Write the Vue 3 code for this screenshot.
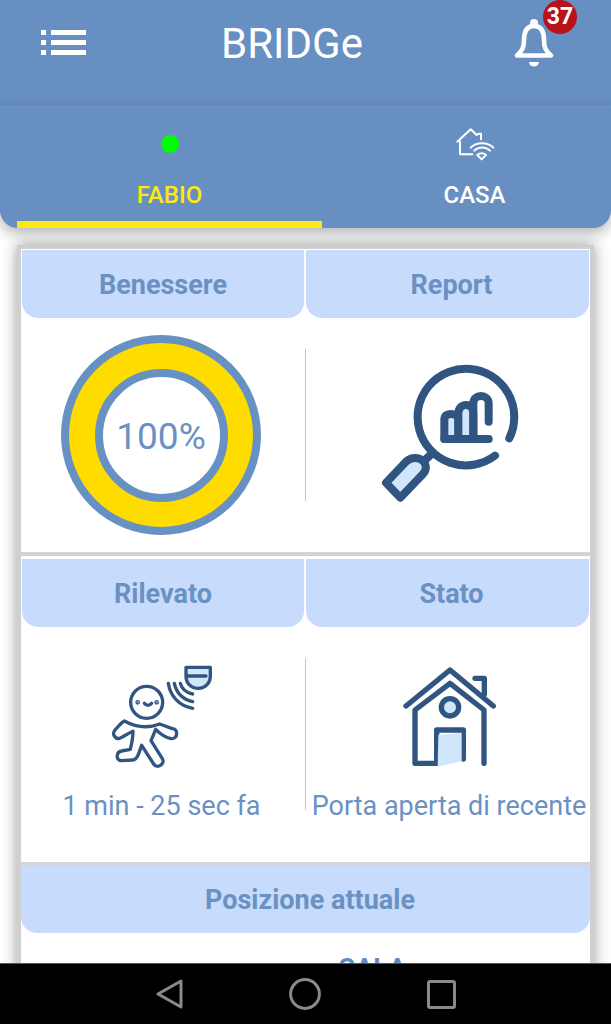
<script setup>
const navy = '#2f5580'
</script>

<template>
  <div class="phone">
    <header class="topbar">
      <div class="menu" aria-label="menu">
        <div class="menu-row" v-for="n in 3" :key="n"><i class="sq"></i><i class="ln"></i></div>
      </div>
      <h1 class="title">BRIDGe</h1>
      <div class="bell-wrap">
        <svg class="bell" width="44" height="50" viewBox="0 0 44 50">
          <circle cx="21" cy="5" r="4" fill="#fff"/>
          <path d="M4 37.5 C9 33 11 30 11 22 C11 13 14 8 21 8 C28 8 31 13 31 22 C31 30 33 33 38 37.5 Z" fill="none" stroke="#fff" stroke-width="4.6" stroke-linejoin="round"/>
          <path d="M16 44 H26 C25.5 47 24 48.5 21 48.5 C18 48.5 16.5 47 16 44 Z" fill="#fff"/>
        </svg>
        <span class="badge">37</span>
      </div>
    </header>

    <nav class="tabs">
      <div class="tab active">
        <div class="tab-icon"><span class="dot"></span></div>
        <span class="tab-label">FABIO</span>
      </div>
      <div class="tab">
        <div class="tab-icon">
          <svg width="40" height="34" viewBox="0 0 120 102" fill="none" stroke="#fff" stroke-width="6" stroke-linecap="round" stroke-linejoin="round">
            <path d="M7 44 L47 7 L65 24 L72 20 H78 V37"/>
            <path d="M15 44 V82 H52"/>
            <path d="M47 62 C64 44 98 44 115 62"/>
            <path d="M58 71 C70 58 93 58 105 71"/>
            <path d="M67 84 C74 77 86 77 93 84 L80 97 Z"/>
          </svg>
        </div>
        <span class="tab-label">CASA</span>
      </div>
    </nav>

    <main class="content">
      <div class="card">
        <section class="section">
          <div class="heads">
            <h2 class="head">Benessere</h2>
            <h2 class="head shifted">Report</h2>
          </div>
          <div class="cells first-cells">
            <div class="cell">
              <div class="donut">
                <div class="donut-mid">
                  <div class="donut-in">100%</div>
                </div>
              </div>
            </div>
            <div class="divider"></div>
            <div class="cell">
              <svg class="icon-report" width="200" height="180" viewBox="0 0 600 540" fill="none" :stroke="navy" stroke-width="24" stroke-linecap="round" stroke-linejoin="round">
                <path d="M462 347 A145 145 0 1 1 505 295"/>
                <path d="M268 345 L240 372"/>
                <path d="M135 428 L195 365 C210 350 235 350 248 365 C258 378 256 392 245 403 L178 473 Z" fill="#cfe6fb"/>
                <path d="M310 240 C310 226 318 222 331 222 C344 222 352 230 352 240 V297 H310 Z" fill="#cfe6fb"/>
                <path d="M352 222 C352 204 362 195 375 195 C388 195 397 204 397 222 V297 H352 Z" fill="#cfe6fb"/>
                <path d="M397 297 V190 C397 175 408 168 420 168 C432 168 443 176 443 190 V245"/>
                <path d="M310 297 H443"/>
              </svg>
            </div>
          </div>
        </section>

        <section class="section second">
          <div class="heads">
            <h2 class="head">Rilevato</h2>
            <h2 class="head shifted">Stato</h2>
          </div>
          <div class="cells second-cells">
            <div class="cell stacked">
              <svg class="icon-person" width="140" height="130" viewBox="0 0 420 390" fill="none" :stroke="navy" stroke-width="10" stroke-linecap="round" stroke-linejoin="round">
                <path d="M285 52 H358 V78 C358 100 342 115 322 115 C300 115 285 100 285 78 Z" fill="#cfe6fb" stroke="none"/>
                <path d="M285 78 V52 H358 V78 C358 100 342 115 322 115 C300 115 285 100 285 78 H345"/>
                <path d="M232 100 C238 140 265 168 305 175"/>
                <path d="M250 100 C256 128 276 148 305 155"/>
                <path d="M268 100 C272 115 286 128 305 132"/>
                <circle cx="167" cy="157" r="48"/>
                <path d="M160 160 C166 168 176 168 182 160"/>
                <circle cx="140" cy="157" r="2" fill="#2f5580"/>
                <circle cx="197" cy="157" r="2" fill="#2f5580"/>
                <path d="M100 213 C90 218 80 232 72 240 C62 252 72 270 88 264 C100 258 112 250 126 244 C126 262 122 282 118 298 L92 303 C74 306 74 332 92 332 L126 330 C134 330 138 322 141 316 L152 286 L188 342 C198 358 224 342 214 326 L180 272 C186 258 190 248 194 238 C208 252 222 262 240 266 C262 268 262 236 244 236 L206 222 C170 236 135 232 100 213 Z"/>
              </svg>
              <p class="cell-text left-text">1 min - 25 sec fa</p>
            </div>
            <div class="divider"></div>
            <div class="cell stacked">
              <svg class="icon-house" width="120" height="125" viewBox="0 0 360 375" fill="none" :stroke="navy" stroke-width="16" stroke-linecap="round" stroke-linejoin="round">
                <path d="M48 153 L180 45 L310 153"/>
                <path d="M255 70 H283 V118"/>
                <path d="M282 325 V165 L180 85 L75 165 V325 H140"/>
                <circle cx="180" cy="157" r="26" fill="#cfe6fb"/>
                <path d="M140 325 V225 H220 V312"/>
                <path d="M145 240 L215 233 V318 L143 336 Z" fill="#cfe6fb" stroke="none"/>
              </svg>
              <p class="cell-text right-text">Porta aperta di recente</p>
            </div>
          </div>
        </section>

        <section class="section third">
          <h2 class="head wide">Posizione attuale</h2>
          <div class="place"><span class="place-name">SALA</span></div>
        </section>
      </div>
    </main>

    <footer class="sysnav">
      <svg width="27" height="30" viewBox="0 0 27 30" fill="none" stroke="#8a8a8a" stroke-width="3" stroke-linejoin="round"><path d="M25 2 V28 L2 15 Z"/></svg>
      <svg width="32" height="32" viewBox="0 0 32 32" fill="none" stroke="#8a8a8a" stroke-width="3"><circle cx="16" cy="16" r="14.4"/></svg>
      <svg width="29" height="29" viewBox="0 0 29 29" fill="none" stroke="#8a8a8a" stroke-width="3" stroke-linejoin="round"><rect x="1.5" y="1.5" width="26" height="26" rx="1.5"/></svg>
    </footer>
  </div>
</template>

<style scoped>
.phone {
  width: 611px;
  height: 1024px;
  display: flex;
  flex-direction: column;
  overflow: hidden;
  background: #fff;
  font-family: Roboto, "Liberation Sans", sans-serif;
}
.topbar {
  height: 106px;
  flex: none;
  background: #678fc1;
  display: grid;
  grid-template-columns: 221px 287px 1fr;
  box-sizing: border-box;
}
.menu {
  margin: 30px 0 0 41px;
  display: flex;
  flex-direction: column;
  gap: 5px;
}
.menu-row { display: flex; gap: 5px; height: 5px; }
.sq { width: 5px; background: #fff; }
.ln { width: 35px; background: #fff; }
.title {
  margin: 0;
  padding-top: 20px;
  font-size: 42px;
  line-height: 48px;
  font-weight: 400;
  color: #fff;
  white-space: nowrap;
}
.bell-wrap { position: relative; }
.bell { display: block; margin: 18px 0 0 5px; }
.badge {
  position: absolute;
  left: 35px;
  top: 0;
  width: 34px;
  height: 34px;
  border-radius: 50%;
  background: #b71318;
  color: #fff;
  font-size: 23px;
  font-weight: 700;
  line-height: 33px;
  text-align: center;
}
.tabs {
  height: 122px;
  flex: none;
  position: relative;
  z-index: 2;
  background: #678fc1;
  border-top: 1px solid #7096c6;
  box-sizing: border-box;
  border-radius: 0 0 18px 18px;
  box-shadow: 0 5px 14px rgba(0, 0, 0, 0.3);
  display: grid;
  grid-template-columns: 305px 305px;
  padding-left: 17px;
  overflow: hidden;
}
.tab {
  height: 121px;
  box-sizing: border-box;
  display: flex;
  flex-direction: column;
  align-items: center;
  border-bottom: 7px solid transparent;
  color: #fff;
}
.tab.active { border-bottom-color: #ffe714; color: #ffe714; }
.tab-icon {
  height: 74px;
  display: flex;
  align-items: center;
  justify-content: center;
  box-sizing: border-box;
}
.dot {
  width: 18px;
  height: 18px;
  border-radius: 50%;
  background: #00ff00;
}
.tab-label {
  font-size: 24px;
  line-height: 28px;
  font-weight: 500;
}
.content {
  flex: 1;
  min-height: 0;
  overflow: hidden;
  padding: 17px 17px 0;
  background: #fff;
}
.card {
  border: 4px solid #cfcfcf;
  border-bottom: 0;
  background: #fff;
  box-shadow: 0 0 14px rgba(0, 0, 0, 0.4);
  min-height: 900px;
}
.section { border-bottom: 4px solid #d4d4d4; }
.second { padding-top: 2px; border-bottom-width: 3px; }
.third { border-bottom: 0; }
.heads {
  display: grid;
  grid-template-columns: 282px 283px;
  gap: 2px;
  padding: 1px 1px 0;
}
.head {
  margin: 0;
  height: 68px;
  background: #c7dbfd;
  border-radius: 0 0 16px 16px;
  color: #6a91c2;
  font-size: 27px;
  font-weight: 700;
  line-height: 71px;
  text-align: center;
}
.shifted { padding-left: 8px; }
.wide { padding-left: 9px; }
.cells {
  display: grid;
  grid-template-columns: 284px 1px 1fr;
}
.first-cells { height: 234px; }
.second-cells { height: 235px; }
.divider {
  background: #c4c4c4;
  margin: 31px 0 auto;
  height: 152px;
}
.cell {
  display: flex;
  justify-content: center;
  align-items: flex-start;
  min-width: 0;
}
.donut {
  margin: 17px 4px 0 0;
  width: 200px;
  height: 200px;
  box-sizing: border-box;
  border-radius: 50%;
  border: 8px solid #6791c3;
  background: #ffdc00;
  display: flex;
  align-items: center;
  justify-content: center;
}
.donut-mid {
  width: 133px;
  height: 133px;
  box-sizing: border-box;
  border-radius: 50%;
  border: 8px solid #6791c3;
  background: #fff;
  display: flex;
  align-items: center;
  justify-content: center;
}
.donut-in {
  font-size: 37px;
  line-height: 42px;
  padding-top: 3px;
  font-weight: 400;
  color: #6a91c2;
}
.icon-report { margin: 22px 15px 0 0; flex: none; }
.stacked {
  flex-direction: column;
  align-items: center;
  justify-content: flex-start;
}
.icon-person { margin: 23px 5px 0 0; flex: none; }
.icon-house { margin: 28px 0 0 4px; flex: none; }
.cell-text {
  margin: 9px 0 0;
  font-size: 27px;
  line-height: 34px;
  color: #6a91c2;
  white-space: nowrap;
}
.left-text { margin-right: 3px; }
.right-text { margin-left: 2px; }
.place {
  display: grid;
  grid-template-columns: 134px 1fr;
  padding-top: 21px;
}
.place-name {
  grid-column: 2;
  text-align: center;
  font-size: 27px;
  line-height: 30px;
  font-weight: 700;
  color: #5f8bc2;
}
.sysnav {
  height: 61px;
  flex: none;
  position: relative;
  z-index: 3;
  background: #000;
  border-top: 1px solid #555;
  box-sizing: border-box;
  display: flex;
  align-items: center;
  gap: 106px;
  padding-left: 156px;
}
</style>
